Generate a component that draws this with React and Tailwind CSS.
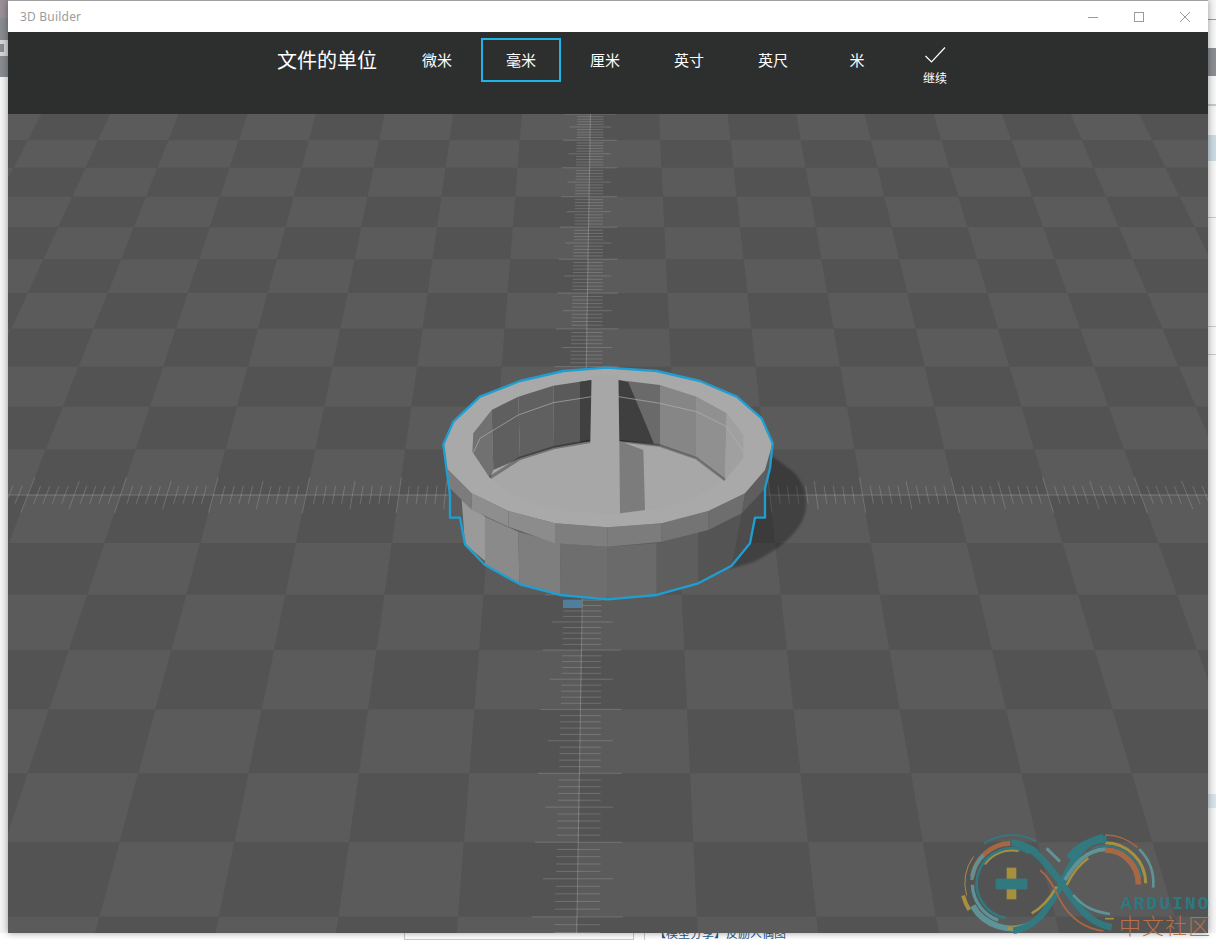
const CJK = { fontFamily: '"Noto Sans CJK SC", "Noto Sans", sans-serif' };

// floor plane: u = cells across, v = cells away from the top edge of the view
const floorY = (v) => 1 / (9.242e-4 - v * 2.187e-5) - 968;
const floorX = (u, y) => 608 + (y + 968) * (-0.01619 + 0.0634 * u);
const pt = (u, v) => {
  const y = floorY(v);
  return [floorX(u, y), y];
};
const pts = (list) => list.map((p) => p.join(",")).join(" ");

const CELLS = [];
for (let v = 0; v < 19; v++) {
  for (let u = -13; u < 13; u++) {
    CELLS.push({ u, v, dark: (((u + v) % 2) + 2) % 2 === 0 });
  }
}

function tickSize(i) {
  if (i % 10 === 0) return 0.38;
  if (i % 5 === 0) return 0.3;
  return 0.19;
}

const BODY = [
  { c: "#5c5c5c", p: "60,400 95,440 105,568 90,488 60,488" },
  { c: "#9a9a9a", p: "95,435 165,485 168,620 105,568" },
  { c: "#8a8a8a", p: "165,485 265,530 268,688 165,630" },
  { c: "#7e7e7e", p: "265,530 390,565 392,720 268,688" },
  { c: "#6e6e6e", p: "390,565 533,575 533,733 392,720" },
  { c: "#6a6a6a", p: "533,575 680,565 680,720 533,733" },
  { c: "#5e5e5e", p: "680,565 805,530 805,685 680,720" },
  { c: "#545454", p: "805,530 935,475 905,632 805,685" },
  { c: "#4c4c4c", p: "935,475 1005,400 1005,488 975,488 960,565 905,632" },
];

const BAND = [
  { c: "#7c7c7c", p: "50,340 125,415 125,465 60,400" },
  { c: "#8e8e8e", p: "125,415 235,468 235,515 125,465" },
  { c: "#8c8c8c", p: "235,468 375,505 375,565 235,515" },
  { c: "#7e7e7e", p: "375,505 533,517 533,575 375,565" },
  { c: "#7c7c7c", p: "533,517 695,505 695,560 533,575" },
  { c: "#747474", p: "695,505 835,468 835,525 695,560" },
  { c: "#6e6e6e", p: "835,468 945,415 935,475 835,525" },
  { c: "#5e5e5e", p: "945,415 1005,345 1005,400 935,475" },
];

const WALL = [
  { c: "#717171", p: "127,290 130,235 185,165 190,345 180,370" },
  { c: "#5f5f5f", p: "185,165 265,125 270,310 190,345" },
  { c: "#606060", p: "265,125 370,92 372,278 270,310" },
  { c: "#5a5a5a", p: "370,92 485,75 485,258 372,278" },
  { c: "#404040", p: "450,80 485,75 485,258 450,262" },
  { c: "#6a6a6a", p: "565,75 690,90 690,272 565,258" },
  { c: "#3f3f3f", p: "565,75 595,82 672,266 565,258" },
  { c: "#868686", p: "690,90 800,125 800,310 690,272" },
  { c: "#909090", p: "800,125 890,175 885,375 800,310" },
  { c: "#a0a0a0", p: "890,175 940,240 940,310 885,375" },
];

const OUTLINE =
  "40,268 70,200 150,125 270,78 400,48 530,38 680,48 810,78 920,125 995,190 1028,265 1020,340 1005,400 1005,488 975,488 960,565 905,632 805,685 680,720 533,733 390,720 270,688 165,630 105,568 90,488 60,488 60,420 50,345";

const TOP_FACE =
  "40,268 70,200 150,125 270,78 400,48 530,38 680,48 810,78 920,125 995,190 1028,265 1005,345 945,415 835,468 695,505 533,517 375,505 235,468 125,415 50,340";

function Scene() {
  return (
    <svg viewBox="8 114 1200 819" className="block w-[1200px] h-[819px]">
      <rect x="8" y="114" width="1200" height="819" fill="#565656" />
      {CELLS.map((c) => (
        <polygon
          key={`${c.u}-${c.v}`}
          fill={c.dark ? "#535353" : "#5b5b5b"}
          points={pts([pt(c.u, c.v), pt(c.u + 1, c.v), pt(c.u + 1, c.v + 1), pt(c.u, c.v + 1)])}
        />
      ))}

      {/* ticks along the depth axis */}
      {Array.from({ length: 191 }, (_, i) => {
        const a = pt(-tickSize(i), i / 10);
        const b = pt(tickSize(i), i / 10);
        return <line key={i} x1={a[0]} y1={a[1]} x2={b[0]} y2={b[1]} stroke="#fff" strokeOpacity="0.17" />;
      })}
      {/* ticks along the cross axis */}
      {Array.from({ length: 161 }, (_, n) => {
        const i = n - 80;
        const s = tickSize(i);
        const a = pt(i / 10, 11 - s);
        const b = pt(i / 10, 11 + s);
        return <line key={i} x1={a[0]} y1={a[1]} x2={b[0]} y2={b[1]} stroke="#fff" strokeOpacity="0.17" />;
      })}
      <line x1={pt(0, 0)[0]} y1="114" x2={pt(0, 18.6)[0]} y2="933" stroke="#fff" strokeOpacity="0.22" />
      <line x1="8" y1="495" x2="1208" y2="495" stroke="#fff" strokeOpacity="0.2" />
      <rect x="563" y="600" width="19" height="8" fill="#4f7f9c" />

      <g transform="translate(430 355) scale(0.33333)">
        <path
          d="M1030,305 L1090,350 C1125,385 1135,430 1125,475 C1110,530 1050,585 960,625 L905,640 L800,600 L900,300 Z"
          fill="#000"
          fillOpacity="0.28"
          className="blur-[3px]"
        />
        <polygon points={OUTLINE} fill="#5c5c5c" />
        {BODY.map((f) => (
          <polygon key={f.p} points={f.p} fill={f.c} />
        ))}
        {BAND.map((f) => (
          <polygon key={f.p} points={f.p} fill={f.c} />
        ))}
        <polygon points={TOP_FACE} fill="#a9a9a9" />
        <polygon
          points="180,370 270,310 372,278 485,258 568,258 690,272 800,310 885,375 810,420 700,460 570,478 420,470 290,440 215,400"
          fill="#a7a7a7"
        />
        {WALL.map((f) => (
          <polygon key={f.p} points={f.p} fill={f.c} />
        ))}
        <polyline
          points="130,292 150,250 265,180 370,143 485,125"
          fill="none"
          stroke="#b4b4b4"
          strokeOpacity="0.65"
          strokeWidth="3"
        />
        <polyline
          points="565,125 690,145 800,170 890,215 940,290"
          fill="none"
          stroke="#b4b4b4"
          strokeOpacity="0.65"
          strokeWidth="3"
        />
        <polyline
          points="180,368 270,310 372,278 485,258"
          fill="none"
          stroke="#000"
          strokeOpacity="0.3"
          strokeWidth="10"
          className="blur-[2px]"
        />
        <polyline
          points="568,258 690,272 800,310 885,375"
          fill="none"
          stroke="#000"
          strokeOpacity="0.28"
          strokeWidth="8"
          className="blur-[2px]"
        />
        <polygon points="485,60 565,60 568,260 570,300 480,300" fill="#a7a7a7" />
        <polygon points="568,258 640,285 645,465 570,475" fill="#7c7c7c" />
        <polygon
          points={OUTLINE}
          fill="none"
          stroke="#1f9ed2"
          strokeWidth="7"
          strokeLinejoin="round"
        />
      </g>
    </svg>
  );
}

// arc around a centre, angles in degrees clockwise from east
function arc(cx, cy, r, a0, a1) {
  const rad = (d) => (d * Math.PI) / 180;
  const x0 = cx + r * Math.cos(rad(a0));
  const y0 = cy + r * Math.sin(rad(a0));
  const x1 = cx + r * Math.cos(rad(a1));
  const y1 = cy + r * Math.sin(rad(a1));
  return `M${x0},${y0} A${r},${r} 0 ${a1 - a0 > 180 ? 1 : 0} 1 ${x1},${y1}`;
}

const TEAL = "#2c8087";
const PALE = "#5f9ea2";
const ORANGE = "#b56b42";
const GOLD = "#b59a3c";

const LOGO_ARCS = [
  [185, 190, 145, 235, 300, TEAL, 5],
  [185, 190, 120, 190, 268, ORANGE, 14],
  [185, 190, 100, 215, 282, GOLD, 9],
  [185, 190, 140, 165, 215, GOLD, 3],
  [185, 190, 105, 100, 300, TEAL, 8],
  [185, 190, 118, 110, 178, PALE, 10],
  [185, 190, 150, 148, 166, GOLD, 12],
  [185, 190, 135, 65, 150, PALE, 18],
  [185, 190, 135, 62, 95, GOLD, 11],
  [185, 190, 120, 185, 225, PALE, 10],
  [185, 190, 120, 270, 310, TEAL, 16],
  [465, 190, 145, 270, 312, ORANGE, 5],
  [465, 190, 145, 315, 365, PALE, 8],
  [465, 190, 122, 270, 360, GOLD, 9],
  [465, 190, 100, 270, 362, ORANGE, 17],
  [465, 190, 112, 250, 350, TEAL, 5],
  [465, 190, 132, 215, 272, TEAL, 20],
];

const LOGO_PATHS = [
  ["M185,68 C250,75 290,130 335,190 C375,245 410,310 485,322", TEAL, 20],
  ["M460,52 C400,60 370,120 335,190 C300,250 270,320 190,332", TEAL, 20],
  ["M465,88 C410,90 375,130 345,180", PALE, 12],
  ["M290,85 L330,125", PALE, 9],
  ["M415,115 C385,135 365,165 350,195", GOLD, 7],
  ["M320,200 C300,235 275,265 245,280", GOLD, 8],
  ["M270,150 C295,170 310,195 330,240 C360,295 400,325 460,333", ORANGE, 5],
  ["M370,225 C400,260 430,275 480,282", PALE, 8],
  ["M465,296 L492,296", GOLD, 5],
];

function Watermark() {
  return (
    <div className="absolute z-20 left-[950px] top-[820px] w-[266px] h-[120px] pointer-events-none">
      <svg viewBox="0 0 798 360" className="block w-[266px] h-[120px] opacity-85">
        {LOGO_ARCS.map(([cx, cy, r, a0, a1, c, w]) => (
          <path key={`${cx}-${r}-${a0}`} d={arc(cx, cy, r, a0, a1)} fill="none" stroke={c} strokeWidth={w} />
        ))}
        {LOGO_PATHS.map(([d, c, w]) => (
          <path key={d} d={d} fill="none" stroke={c} strokeWidth={w} />
        ))}
        <rect x="170" y="143" width="29" height="95" fill={GOLD} />
        <rect x="137" y="176" width="95" height="32" fill={TEAL} />
      </svg>
      <div
        className="absolute left-[171px] top-[76px] text-[18px] leading-[16px] font-bold tracking-[2px] text-[#2a7a80] whitespace-nowrap"
        style={{ fontFamily: '"Liberation Mono", monospace' }}
      >
        ARDUINO
      </div>
      <div
        className="absolute left-[169px] top-[94px] text-[22px] leading-[20px] font-light tracking-[1px] text-[#b87048] whitespace-nowrap"
        style={CJK}
      >
        中文社区
      </div>
    </div>
  );
}

const UNITS = ["微米", "毫米", "厘米", "英寸", "英尺", "米"];

function TitleBar() {
  return (
    <div className="h-[31px] bg-white flex items-center justify-between">
      <span className="pl-3 text-[12px] tracking-[0.2px] text-[#9c9c9c]" style={{ fontFamily: '"Noto Sans", sans-serif' }}>
        3D Builder
      </span>
      <div className="flex items-center">
        <div className="w-[46px] h-[31px] flex items-center justify-center">
          <svg width="12" height="12" viewBox="0 0 12 12">
            <line x1="1" y1="6.5" x2="11" y2="6.5" stroke="#9a9a9a" />
          </svg>
        </div>
        <div className="w-[46px] h-[31px] flex items-center justify-center">
          <svg width="12" height="12" viewBox="0 0 12 12">
            <rect x="1.5" y="1.5" width="9" height="9" fill="none" stroke="#9a9a9a" />
          </svg>
        </div>
        <div className="w-[46px] h-[31px] flex items-center justify-center">
          <svg width="12" height="12" viewBox="0 0 12 12">
            <path d="M1 1 L11 11 M11 1 L1 11" stroke="#9a9a9a" fill="none" />
          </svg>
        </div>
      </div>
    </div>
  );
}

function UnitBar() {
  return (
    <div className="h-[82px] bg-[#2d2f2e] pl-[269px] pt-[6px] flex items-start text-white" style={CJK}>
      <div className="h-11 flex items-center text-[20px] mr-5">文件的单位</div>
      <div className="flex gap-1">
        {UNITS.map((u) => (
          <div
            key={u}
            className={
              u === "毫米"
                ? "w-20 h-11 flex items-center justify-center text-[15px] border-2 border-[#1eb4ea]"
                : "w-20 h-11 flex items-center justify-center text-[15px]"
            }
          >
            {u}
          </div>
        ))}
        <div className="w-[68px] h-11 flex flex-col items-center">
          <svg width="22" height="18" viewBox="0 0 22 18" className="mt-[8px] shrink-0">
            <path d="M1.5 10 L7.5 16 L21 1.5" fill="none" stroke="#fff" strokeWidth="1.2" />
          </svg>
          <span className="shrink-0 text-[12px] leading-[16px] mt-[6px] whitespace-nowrap">继续</span>
        </div>
      </div>
    </div>
  );
}

export default function App() {
  return (
    <div className="relative w-[1216px] h-[940px] overflow-hidden bg-white">
      <div className="flex">
        <div className="w-2 h-[933px] flex flex-col bg-[#f4f4f4]">
          <div className="h-[18px] bg-[#9a8f96]" />
          <div className="h-[59px] bg-[#888c91] flex items-center">
            <span className="w-2 h-4 border-y-4 border-r-4 border-[#d6d6d6]" />
          </div>
        </div>
        <div className="relative z-10 w-[1200px] h-[933px] border-t border-[#a0a0a0] shadow-[0_0_7px_rgba(0,0,0,0.4)]">
          <TitleBar />
          <UnitBar />
          <Scene />
        </div>
        <div className="w-2 h-[933px] flex flex-col bg-[#f6f6f6]">
          <div className="h-[20px] border-b border-[#9a9a9a]" />
          <div className="mt-[28px] h-[28px] bg-[#8a8d92]" />
          <div className="mt-[28px] h-[2px] bg-[#c8c8c8]" />
          <div className="mt-[29px] h-[26px] bg-[#ccdbe3]" />
          <div className="mt-[56px] h-px bg-[#c8c8c8]" />
          <div className="mt-[108px] h-px bg-[#c8c8c8]" />
          <div className="mt-[27px] h-px bg-[#c8c8c8]" />
          <div className="mt-[439px] h-[14px] bg-[#d8e4ec]" />
        </div>
      </div>
      <div className="h-[7px] overflow-hidden flex">
        <div className="ml-[404px] w-[230px] h-[7px] border-x border-b border-[#c8c8c8]" />
        <div className="ml-[10px] w-px h-[7px] bg-[#c8c8c8]" />
        <span
          className="ml-[9px] -mt-[9px] text-[12px] leading-[18px] text-[#1f5a8c] whitespace-nowrap"
          style={CJK}
        >
          【模型分享】反励人偶图
        </span>
      </div>
      <Watermark />
    </div>
  );
}
